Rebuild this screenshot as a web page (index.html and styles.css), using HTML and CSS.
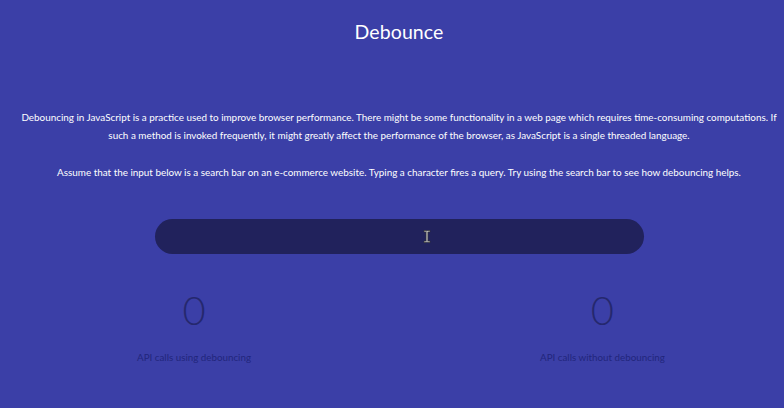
FILE: index.html
```html
<!DOCTYPE html>
<html>
<head>
<meta charset="utf-8">
<link rel="stylesheet" href="styles.css">
</head>
<body>
<main class="page">
  <h1 class="title">Debounce</h1>
  <section class="intro">
    <p>Debouncing in JavaScript is a practice used to improve browser performance. There might be some functionality in a web page which requires time-consuming computations. If such a method is invoked frequently, it might greatly affect the performance of the browser, as JavaScript is a single threaded language.</p>
    <p>Assume that the input below is a search bar on an e-commerce website. Typing a character fires a query. Try using the search bar to see how debouncing helps.</p>
  </section>
  <div class="search-wrap">
    <input class="search" type="text">
    <svg class="cursor" width="8" height="15" viewBox="0 0 8 15">
      <path d="M1 1.5h2.2l0.8 0.8l0.8-0.8H7v1.4H4.9v9.2H7v1.4H4.8l-0.8-0.8l-0.8 0.8H1v-1.4h2.1V2.9H1z" fill="#d8d8d8" stroke="#333" stroke-width="0.7"/>
    </svg>
  </div>
  <div class="stats">
    <div class="stat">
      <div class="count">0</div>
      <div class="label">API calls using debouncing</div>
    </div>
    <div class="stat">
      <div class="count">0</div>
      <div class="label">API calls without debouncing</div>
    </div>
  </div>
</main>
</body>
</html>
```
FILE: styles.css
```css
html, body {
  margin: 0;
  padding: 0;
  background: #3b3fa7;
  height: 100%;
  overflow: hidden;
}
.page {
  width: 798px;
  font-family: Lato, "Noto Sans", sans-serif;
  color: #ffffff;
  text-align: center;
}
.title {
  margin: 0;
  padding-top: 19px;
  font-size: 19.5px;
  line-height: 26px;
  font-weight: 400;
  letter-spacing: 0.1px;
}
.intro {
  padding: 0 16px;
  margin-top: 63px;
  font-size: 9.9px;
  line-height: 18px;
}
.intro p {
  margin: 0 0 19px;
}
.search-wrap {
  position: relative;
  width: 489px;
  height: 35px;
  margin: 38px auto 0;
}
.search {
  display: block;
  box-sizing: border-box;
  width: 100%;
  height: 35px;
  border: none;
  outline: none;
  border-radius: 18px;
  background: #21225c;
  padding: 0 20px;
}
.cursor {
  position: absolute;
  left: 268px;
  top: 10px;
}
.stats {
  display: flex;
  gap: 289px;
  padding-left: 137px;
  margin-top: 34px;
  color: #25286e;
}
.stat {
  display: flex;
  flex-direction: column;
  align-items: center;
}
.count {
  font-size: 40px;
  font-weight: 300;
  line-height: 44px;
}
.label {
  margin-top: 18px;
  font-size: 9.8px;
  line-height: 14px;
  color: #22267c;
}
```
